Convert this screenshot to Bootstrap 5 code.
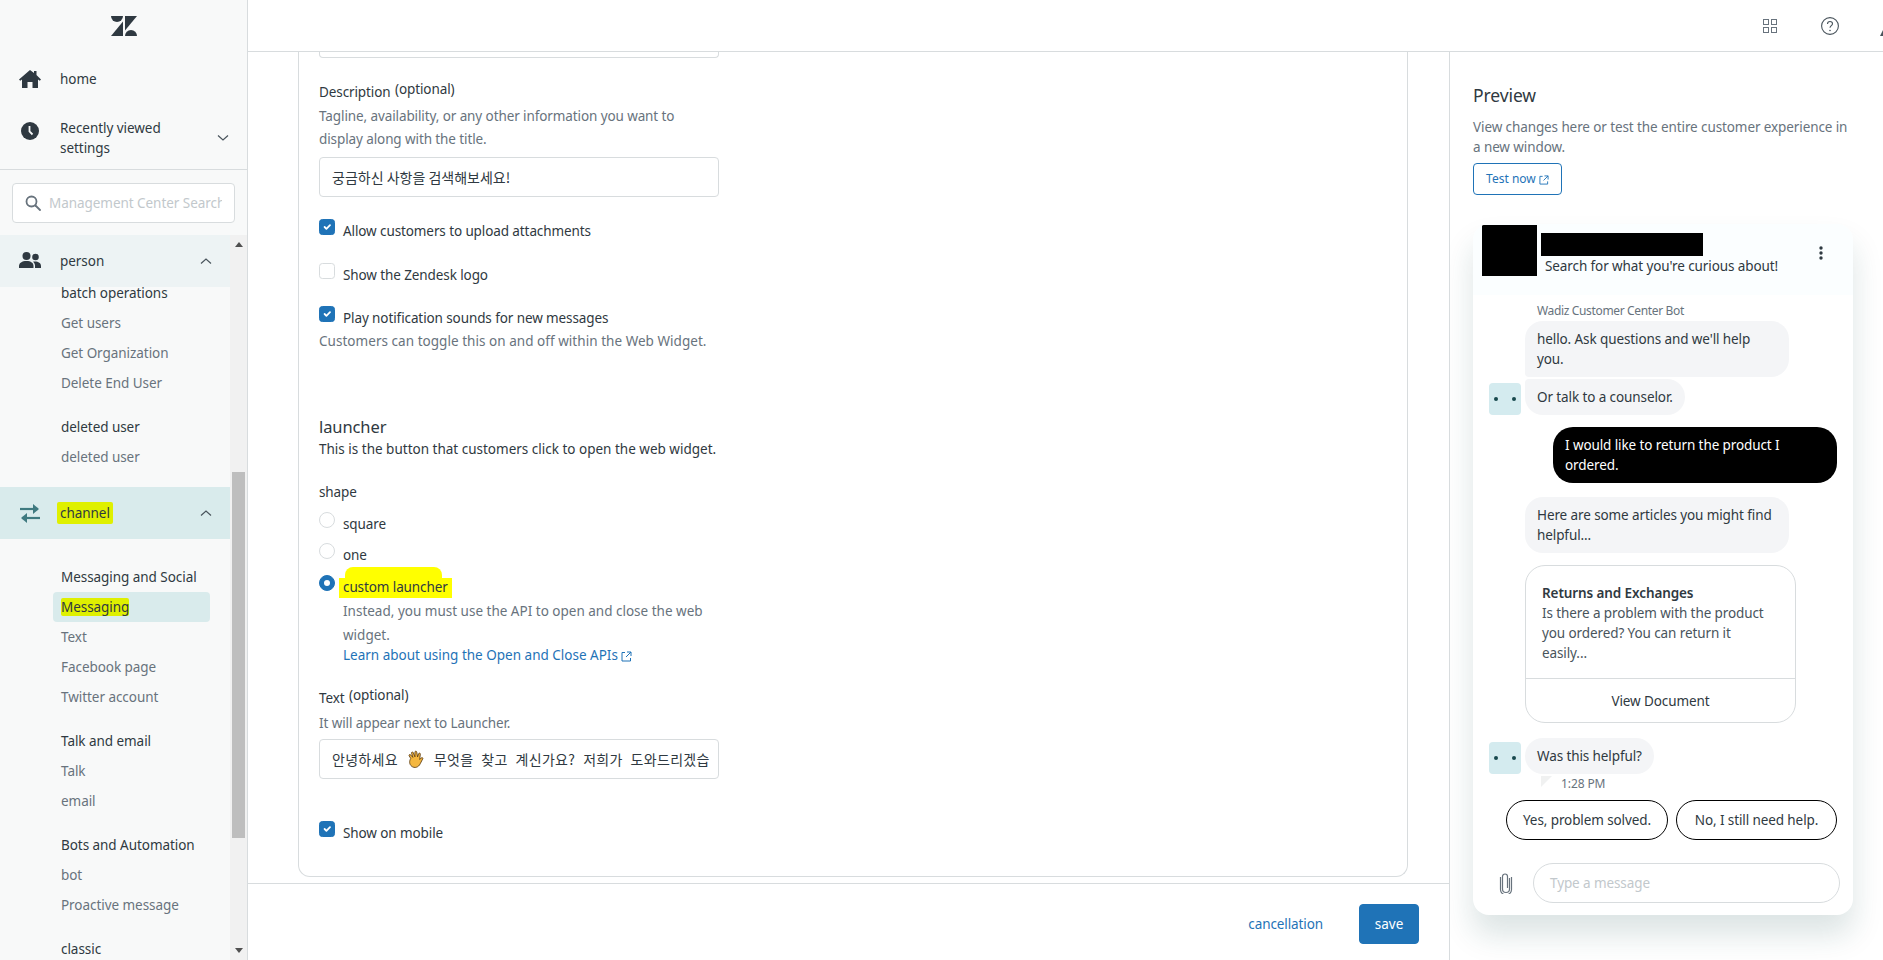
<!DOCTYPE html>
<html lang="en">
<head>
<meta charset="utf-8">
<title>Messaging settings</title>
<link href="https://cdn.jsdelivr.net/npm/bootstrap@5.3.0/dist/css/bootstrap.min.css" rel="stylesheet">
<style>
html,body{height:100%;overflow:hidden}
body{font-family:"Noto Sans","Noto Sans CJK KR",sans-serif;font-size:13.5px;letter-spacing:-.1px;line-height:20px;color:#2f3941;background:#fff}
.zd-shell{height:960px}
.zd-side{width:248px;flex:none;background:#f8f9f9;border-right:1px solid #d8dcde;height:960px;letter-spacing:-.05px}
.zd-logo{height:52px}
.zd-top{height:54px;padding-left:18px}
.zd-top svg{flex:none}
.zd-recent{height:64px;padding-left:18px;padding-right:18px;border-bottom:1px solid #d8dcde}
.zd-navtext{margin-left:18px;line-height:20px}
.zd-searchwrap{padding:13px 12px 12px}
.zd-search{height:40px;border:1px solid #d8dcde;border-radius:4px;background:#fff;padding:0 12px;color:#c2c8cc;overflow:hidden;white-space:nowrap}
.zd-search svg{flex:none}
.zd-search span{overflow:hidden;margin-left:8px}
.zd-scroll{height:725px;overflow:hidden}
.zd-scrollcol{width:230px;flex:none}
.zd-sect{height:52px;padding-left:18px;padding-right:18px;position:relative;z-index:1;background:#edf3f4}
.zd-sect-on{background:#d9ebec}
.zd-head{height:29px;line-height:29px;padding-left:61px;color:#2f3941}
.zd-item{height:30px;line-height:30px;padding-left:61px;color:#68737d}
.zd-first{margin-top:-8px}
.zd-gap{margin-top:15px}
.zd-gap24{margin-top:24px}
.zd-active{background:#d9ebec;margin-left:53px;width:157px;padding-left:8px;border-radius:4px;color:#2f3941}
.zd-track{width:17px;flex:none;background:#f1f1f1;padding:0 2px}
.zd-up{width:0;height:0;border:4px solid transparent;border-top:0;border-bottom:5px solid #505050;margin:7px auto 0}
.zd-down{width:0;height:0;border:4px solid transparent;border-bottom:0;border-top:5px solid #505050;margin:0 auto}
.zd-thumb{height:366px;background:#bebebe;margin-top:225px;margin-bottom:110px}
.hl{background:#dff000;border-radius:2px}
.hl-ch{padding:2px 3px;margin-left:-3px}
.zd-main{flex:1 1 auto;min-width:0}
.zd-header{height:52px;border-bottom:1px solid #d8dcde}
.zd-center{flex:none;width:1201px;height:908px}
.zd-form{height:831px;padding-left:50px;overflow:hidden}
.zd-card{width:1110px;height:825px;border:1px solid #d8dcde;border-top:0;border-radius:0 0 12px 12px;padding-left:20px}
.zd-stub{width:400px;height:6px;border:1px solid #d8dcde;border-top:0;border-radius:0 0 4px 4px}
.zd-w400{width:400px}
.zd-help{color:#68737d}
.zd-lh23{line-height:23px}
.zd-lh24{line-height:24px}
.zd-lab{height:20px}
.zd-opt{font-size:13.5px;position:relative;top:-3px;margin-left:1px}
.zd-ls0{letter-spacing:0}
.zd-ls1{letter-spacing:.04px}
.zd-input{height:40px;border:1px solid #d8dcde;border-radius:4px;padding:0 12px;line-height:38px;font-size:14px;letter-spacing:0;color:#2f3941;font-family:"Noto Sans CJK KR","Noto Sans",sans-serif;white-space:nowrap;overflow:hidden;background:#fff}
.zd-wide{word-spacing:4.500px;letter-spacing:.3px}
.zd-emoji{vertical-align:-4px;margin:0 1px}
.zd-check{min-height:22px;padding-left:24px;margin-bottom:0;line-height:20px}
.zd-check .form-check-input{width:16px;height:16px;margin-top:0;margin-left:-24px;border-color:#d8dcde;background-size:12px}
.zd-check .form-check-input:checked{background-color:#1f73b7;border-color:#1f73b7}
.zd-check .form-check-label{display:block;padding-top:2px;opacity:1}
.zd-h18{font-size:16.500px;line-height:24px;color:#2f3941}
.zd-h-prev{font-size:17.500px}
.zd-link{color:#1f73b7;text-decoration:none}
.zd-blob{position:relative;z-index:0;display:inline-block}
.zd-blob::before{content:"";position:absolute;z-index:-1;left:-4px;right:-4px;top:1px;bottom:-1px;background:#ff0}
.zd-blob::after{content:"";position:absolute;z-index:-1;left:2px;right:6px;top:-10px;height:14px;background:#ff0;border-radius:8px 8px 0 0}
.zd-footer{height:77px;border-top:1px solid #d8dcde;padding:20px 30px 0 0}
.zd-save{width:60px;height:40px;background:#1f73b7;border-color:#1f73b7;color:#fff;font-size:13.5px;padding:0;margin-left:36px;border-radius:4px}
.zd-preview{flex:none;width:434px;height:908px;border-left:1px solid #d8dcde;padding:31px 0 0 23px;overflow:hidden}
.zd-desc{width:380px;margin-top:10px}
.zd-test{width:89px;height:32px;border:1px solid #1f73b7;border-radius:4px;color:#1f73b7;font-size:12px;padding:0;margin-top:6px;line-height:30px;background:#fff}
.zd-widget{width:380px;height:691px;margin-top:29px;border-radius:16px;box-shadow:0 20px 30px rgba(23,73,77,.15);background:#fff;overflow:hidden}
.zd-whead{height:71px;background:#fbfeff;padding:1px 0 0 9px}
.zd-black{background:#000}
.zd-bavatar{width:55px;height:51px;flex:none}
.zd-wtitle{width:162px;height:23px;margin-top:8px}
.zd-wsub{padding-left:4px;color:#2f3941}
.zd-kebab{margin-left:auto;margin-right:30px;margin-top:21px}
.zd-botname{font-size:12px;line-height:16px;color:#68737d;margin:8px 0 2px 64px;letter-spacing:-.35px}
.zd-row{padding-left:52px}
.zd-rowav{padding-left:16px;gap:4px}
.zd-av{width:32px;height:32px;flex:none;background:#d4ebef;border-radius:4px;gap:14px}
.zd-dot{width:4px;height:4px;border-radius:50%;background:#17494d}
.zd-bub{background:#f4f5f7;padding:8px 12px;border-radius:18px;display:inline-block;line-height:20px}
.zd-b264{width:264px}
.zd-bub-top{border-bottom-left-radius:4px}
.zd-bub-bot{border-top-left-radius:4px}
.zd-user{width:284px;margin-left:80px;margin-top:12px;background:#000;color:#fff;padding:8px 12px;border-radius:20px}
.zd-art{width:271px;height:158px;margin:12px 0 0 52px;border:1px solid #d8dcde;border-radius:20px}
.zd-artbody{height:113px;padding:17px 16px 0;border-bottom:1px solid #d8dcde;color:#49545c}
.zd-arttitle{font-weight:600;color:#2f3941}
.zd-artfoot{height:43px}
.zd-time{font-size:12px;line-height:16px;color:#68737d;margin:2px 0 0 68px;gap:9px}
.zd-tri{width:0;height:0;border-top:11px solid #f0f1f1;border-right:11px solid transparent;display:block}
.zd-pills{margin-top:8px;padding-right:16px;gap:8px}
.zd-pill{height:40px;min-width:161px;border:1.5px solid #000;border-radius:20px;background:#fff;color:#2f3941;padding:0 16px;white-space:nowrap;font-size:13.5px;letter-spacing:-.1px}
.zd-comp{margin-top:23px;padding-left:26px}
.zd-msg{width:307px;height:40px;border:1px solid #d8dcde;border-radius:20px;margin-left:20px;padding:0 16px;color:#c2c8cc}
</style>
</head>
<body>
<div class="d-flex zd-shell">
  <aside class="zd-side d-flex flex-column">
    <div class="zd-logo d-flex align-items-center justify-content-center">
      <svg width="26" height="20" viewBox="0 0 26 20" fill="#2f3941"><path d="M0 0h12a6 6 0 0 1-12 0z"/><path d="M0 20 12 5.500V20z"/><path d="M14 0h12L14 14.500z"/><path d="M14 20a6 6 0 0 1 12 0z"/></svg>
    </div>
    <div class="zd-top d-flex align-items-center">
      <svg width="24" height="20" viewBox="0 0 24 20" fill="#2f3941"><path d="M12 1 1 10.500l1.200 1.300L4 10.400V19h5.500v-6h5v6H20v-8.600l1.800 1.400 1.200-1.300L18.500 6V2H16v2z"/></svg>
      <span class="zd-navtext">home</span>
    </div>
    <div class="zd-recent d-flex align-items-center">
      <svg class="align-self-start" style="margin-top:15px" width="24" height="20" viewBox="0 0 24 20"><circle cx="12" cy="10" r="9" fill="#2f3941"/><path d="M11.500 5v5.500l3 3" fill="none" stroke="#f8f9f9" stroke-width="1.800"/></svg>
      <span class="zd-navtext flex-grow-1">Recently viewed<br>settings</span>
      <svg width="12" height="8" viewBox="0 0 12 8" fill="none" stroke="#49545c" stroke-width="1.200"><path d="M1 1.500 6 6l5-4.500"/></svg>
    </div>
    <div class="zd-searchwrap">
      <div class="zd-search d-flex align-items-center">
        <svg width="16" height="16" viewBox="0 0 16 16" fill="none" stroke="#68737d" stroke-width="1.800"><circle cx="6.500" cy="6.500" r="5"/><path d="m10.500 10.500 4.500 4.500" stroke-linecap="round"/></svg>
        <span>Management Center Search</span>
      </div>
    </div>
    <div class="zd-scroll d-flex">
      <div class="zd-scrollcol">
        <div class="zd-sect d-flex align-items-center">
          <svg width="24" height="20" viewBox="0 0 24 20" fill="#2f3941"><circle cx="8.500" cy="5" r="4"/><circle cx="17.500" cy="6" r="3.300"/><path d="M1 17v-2c0-3 3-5 7.500-5s7 2 7 5v2z"/><path d="M17 10.500c3.500 0 6 1.700 6 4.500v2h-6v-2.500c0-1.500-.8-3-2-3.800.6-.2 1.300-.2 2-.2z"/></svg>
          <span class="zd-navtext flex-grow-1">person</span>
          <svg width="12" height="8" viewBox="0 0 12 8" fill="none" stroke="#49545c" stroke-width="1.200"><path d="M1 6.500 6 2l5 4.500"/></svg>
        </div>
        <div class="zd-head zd-first">batch operations</div>
        <div class="zd-item">Get users</div>
        <div class="zd-item">Get Organization</div>
        <div class="zd-item">Delete End User</div>
        <div class="zd-head zd-gap">deleted user</div>
        <div class="zd-item">deleted user</div>
        <div class="zd-sect zd-sect-on zd-gap d-flex align-items-center">
          <svg width="24" height="22" viewBox="0 0 24 22" fill="none" stroke="#3f7a80" stroke-width="2.200"><path d="M2 7h18"/><path d="M15 2l6 5-6 5" stroke-width="0" fill="#3f7a80"/><path d="M22 16H4"/><path d="M9 11l-6 5 6 5" stroke-width="0" fill="#3f7a80"/></svg>
          <span class="zd-navtext flex-grow-1"><span class="hl hl-ch">channel</span></span>
          <svg width="12" height="8" viewBox="0 0 12 8" fill="none" stroke="#49545c" stroke-width="1.200"><path d="M1 6.500 6 2l5 4.500"/></svg>
        </div>
        <div class="zd-head zd-gap24">Messaging and Social</div>
        <div class="zd-item zd-active"><span class="hl">Messaging</span></div>
        <div class="zd-item">Text</div>
        <div class="zd-item">Facebook page</div>
        <div class="zd-item">Twitter account</div>
        <div class="zd-head zd-gap">Talk and email</div>
        <div class="zd-item">Talk</div>
        <div class="zd-item">email</div>
        <div class="zd-head zd-gap">Bots and Automation</div>
        <div class="zd-item">bot</div>
        <div class="zd-item">Proactive message</div>
        <div class="zd-head zd-gap">classic</div>
      </div>
      <div class="zd-track">
        <div class="zd-up"></div>
        <div class="zd-thumb"></div>
        <div class="zd-down"></div>
      </div>
    </div>
  </aside>
  <div class="zd-main d-flex flex-column">
    <header class="zd-header d-flex align-items-center justify-content-end">
      <svg width="14" height="14" viewBox="0 0 14 14" fill="none" stroke="#68737d" stroke-width="1"><rect x=".5" y=".5" width="5" height="5"/><rect x="8.500" y=".5" width="5" height="5"/><rect x=".5" y="8.500" width="5" height="5"/><rect x="8.500" y="8.500" width="5" height="5"/></svg>
      <svg style="margin-left:44px" width="18" height="18" viewBox="0 0 18 18" fill="none" stroke="#49545c" stroke-width="1.100"><circle cx="9" cy="9" r="8.400"/><path d="M6.500 7c0-1.500 1-2.500 2.500-2.500s2.500 1 2.500 2.300c0 1.800-2.500 2-2.500 4"/><circle cx="9" cy="13.500" r=".8" fill="#49545c" stroke="none"/></svg>
      <svg style="margin-left:41px;margin-top:14px" width="3" height="6" viewBox="0 0 3 6" fill="#49545c"><path d="M3 0v6H0z"/></svg>
    </header>
    <div class="d-flex">
      <div class="zd-center d-flex flex-column">
        <div class="zd-form">
          <div class="zd-card">
            <div class="zd-stub"></div>
            <div class="zd-w400">
              <div class="zd-lab" style="margin-top:24px">Description <span class="zd-opt">(optional)</span></div>
              <div class="zd-help zd-lh23" style="margin-top:3px">Tagline, availability, or any other information you want to display along with the title.</div>
              <div class="zd-input" style="margin-top:6px">궁금하신 사항을 검색해보세요!</div>
              <div class="form-check zd-check" style="margin-top:22px"><input class="form-check-input" type="checkbox" id="c1" checked><label class="form-check-label" for="c1">Allow customers to upload attachments</label></div>
              <div class="form-check zd-check" style="margin-top:22px"><input class="form-check-input" type="checkbox" id="c2"><label class="form-check-label" for="c2">Show the Zendesk logo</label></div>
              <div class="form-check zd-check" style="margin-top:21px"><input class="form-check-input" type="checkbox" id="c3" checked><label class="form-check-label" for="c3">Play notification sounds for new messages</label></div>
              <div class="zd-help zd-ls1" style="margin-top:3px">Customers can toggle this on and off within the Web Widget.</div>
              <div class="zd-h18" style="margin-top:64px">launcher</div>
              <div class="zd-ls0">This is the button that customers click to open the web widget.</div>
              <div style="margin-top:23px">shape</div>
              <div class="form-check zd-check" style="margin-top:10px"><input class="form-check-input" type="radio" name="s" id="r1"><label class="form-check-label" for="r1">square</label></div>
              <div class="form-check zd-check" style="margin-top:9px"><input class="form-check-input" type="radio" name="s" id="r2"><label class="form-check-label" for="r2">one</label></div>
              <div class="form-check zd-check" style="margin-top:10px"><input class="form-check-input" type="radio" name="s" id="r3" checked><label class="form-check-label" for="r3"><span class="zd-blob">custom launcher</span></label>
                <div class="zd-help zd-lh24 zd-ls0" style="margin-top:2px">Instead, you must use the API to open and close the web widget.</div>
                <div class="zd-ls0" style="margin-top:-2px"><a class="zd-link" href="#">Learn about using the Open and Close APIs <svg width="11" height="11" viewBox="0 0 11 11" fill="none" stroke="#1f73b7"><path d="M4 1.500H1v8.500h8.500V7M6 1h4v4M10 1 5 6"/></svg></a></div>
              </div>
              <div class="zd-lab" style="margin-top:23px">Text <span class="zd-opt">(optional)</span></div>
              <div class="zd-help" style="margin-top:5px">It will appear next to Launcher.</div>
              <div class="zd-input zd-wide" style="margin-top:6px">안녕하세요 <svg class="zd-emoji" width="18" height="19" viewBox="0 0 16 18"><path d="M3 8 1.500 5.500c-.5-1 .8-1.800 1.500-.8L5 7 3.800 3c-.3-1.100 1.200-1.600 1.600-.5L7 6.500 7 2c0-1.200 1.600-1.200 1.700 0L9.500 6.500 10.500 3.500c.4-1 1.800-.6 1.600.5L11.500 9l1.500-1.500c.8-.8 2 .2 1.300 1.100L12 13c-1.500 3.500-5.500 4.500-8 2.500C1.500 13.500 1.500 10.500 3 8z" fill="#f4b740" stroke="#5a3a10" stroke-width=".8"/></svg> 무엇을 찾고 계신가요? 저희가 도와드리겠습</div>
              <div class="form-check zd-check" style="margin-top:42px"><input class="form-check-input" type="checkbox" id="c4" checked><label class="form-check-label" for="c4">Show on mobile</label></div>
            </div>
          </div>
        </div>
        <div class="zd-footer d-flex justify-content-end align-items-start">
          <a class="zd-link" style="margin-top:10px" href="#">cancellation</a>
          <button class="btn zd-save" type="button">save</button>
        </div>
      </div>
      <section class="zd-preview">
        <div class="zd-h18 zd-h-prev">Preview</div>
        <div class="zd-help zd-desc">View changes here or test the entire customer experience in a new window.</div>
        <button class="btn zd-test" type="button">Test now <svg width="10" height="10" viewBox="0 0 11 11" fill="none" stroke="#1f73b7"><path d="M4 1.500H1v8.500h8.500V7M6 1h4v4M10 1 5 6"/></svg></button>
        <div class="zd-widget d-flex flex-column">
          <div class="zd-whead d-flex">
            <div class="zd-black zd-bavatar"></div>
            <div style="margin-left:4px">
              <div class="zd-black zd-wtitle"></div>
              <div class="zd-wsub">Search for what you're curious about!</div>
            </div>
            <svg class="zd-kebab" width="4" height="14" viewBox="0 0 4 14" fill="#2f3941"><circle cx="2" cy="2" r="1.700"/><circle cx="2" cy="7" r="1.700"/><circle cx="2" cy="12" r="1.700"/></svg>
          </div>
          <div class="zd-botname">Wadiz Customer Center Bot</div>
          <div class="zd-row"><div class="zd-bub zd-b264 zd-bub-top">hello. Ask questions and we'll help you.</div></div>
          <div class="d-flex align-items-end zd-rowav" style="margin-top:2px">
            <div class="zd-av d-flex align-items-center justify-content-center"><span class="zd-dot"></span><span class="zd-dot"></span></div>
            <div class="zd-bub zd-bub-bot">Or talk to a counselor.</div>
          </div>
          <div class="zd-user">I would like to return the product I ordered.</div>
          <div class="zd-row" style="margin-top:14px"><div class="zd-bub zd-b264">Here are some articles you might find helpful...</div></div>
          <div class="zd-art">
            <div class="zd-artbody"><div class="zd-arttitle">Returns and Exchanges</div>Is there a problem with the product you ordered? You can return it easily...</div>
            <div class="zd-artfoot d-flex align-items-center justify-content-center">View Document</div>
          </div>
          <div class="d-flex align-items-end zd-rowav" style="margin-top:15px">
            <div class="zd-av d-flex align-items-center justify-content-center"><span class="zd-dot"></span><span class="zd-dot"></span></div>
            <div class="zd-bub">Was this helpful?</div>
          </div>
          <div class="zd-time d-flex"><span class="zd-tri"></span><span>1:28 PM</span></div>
          <div class="zd-pills d-flex justify-content-end">
            <button class="btn zd-pill" type="button">Yes, problem solved.</button>
            <button class="btn zd-pill" type="button">No, I still need help.</button>
          </div>
          <div class="zd-comp d-flex align-items-center">
            <svg width="14" height="22" viewBox="0 0 14 22" fill="none" stroke="#68737d" stroke-width="1.200"><path d="M10.500 6v11a3.500 3.500 0 0 1-7 0V4.500a2.500 2.500 0 0 1 5 0V16"/><path d="M12.500 5v12.500a5.500 5.500 0 0 1-11 0V5"/></svg>
            <div class="zd-msg d-flex align-items-center">Type a message</div>
          </div>
        </div>
      </section>
    </div>
  </div>
</div>
<script src="https://cdn.jsdelivr.net/npm/bootstrap@5.3.0/dist/js/bootstrap.bundle.min.js"></script>
</body>
</html>
